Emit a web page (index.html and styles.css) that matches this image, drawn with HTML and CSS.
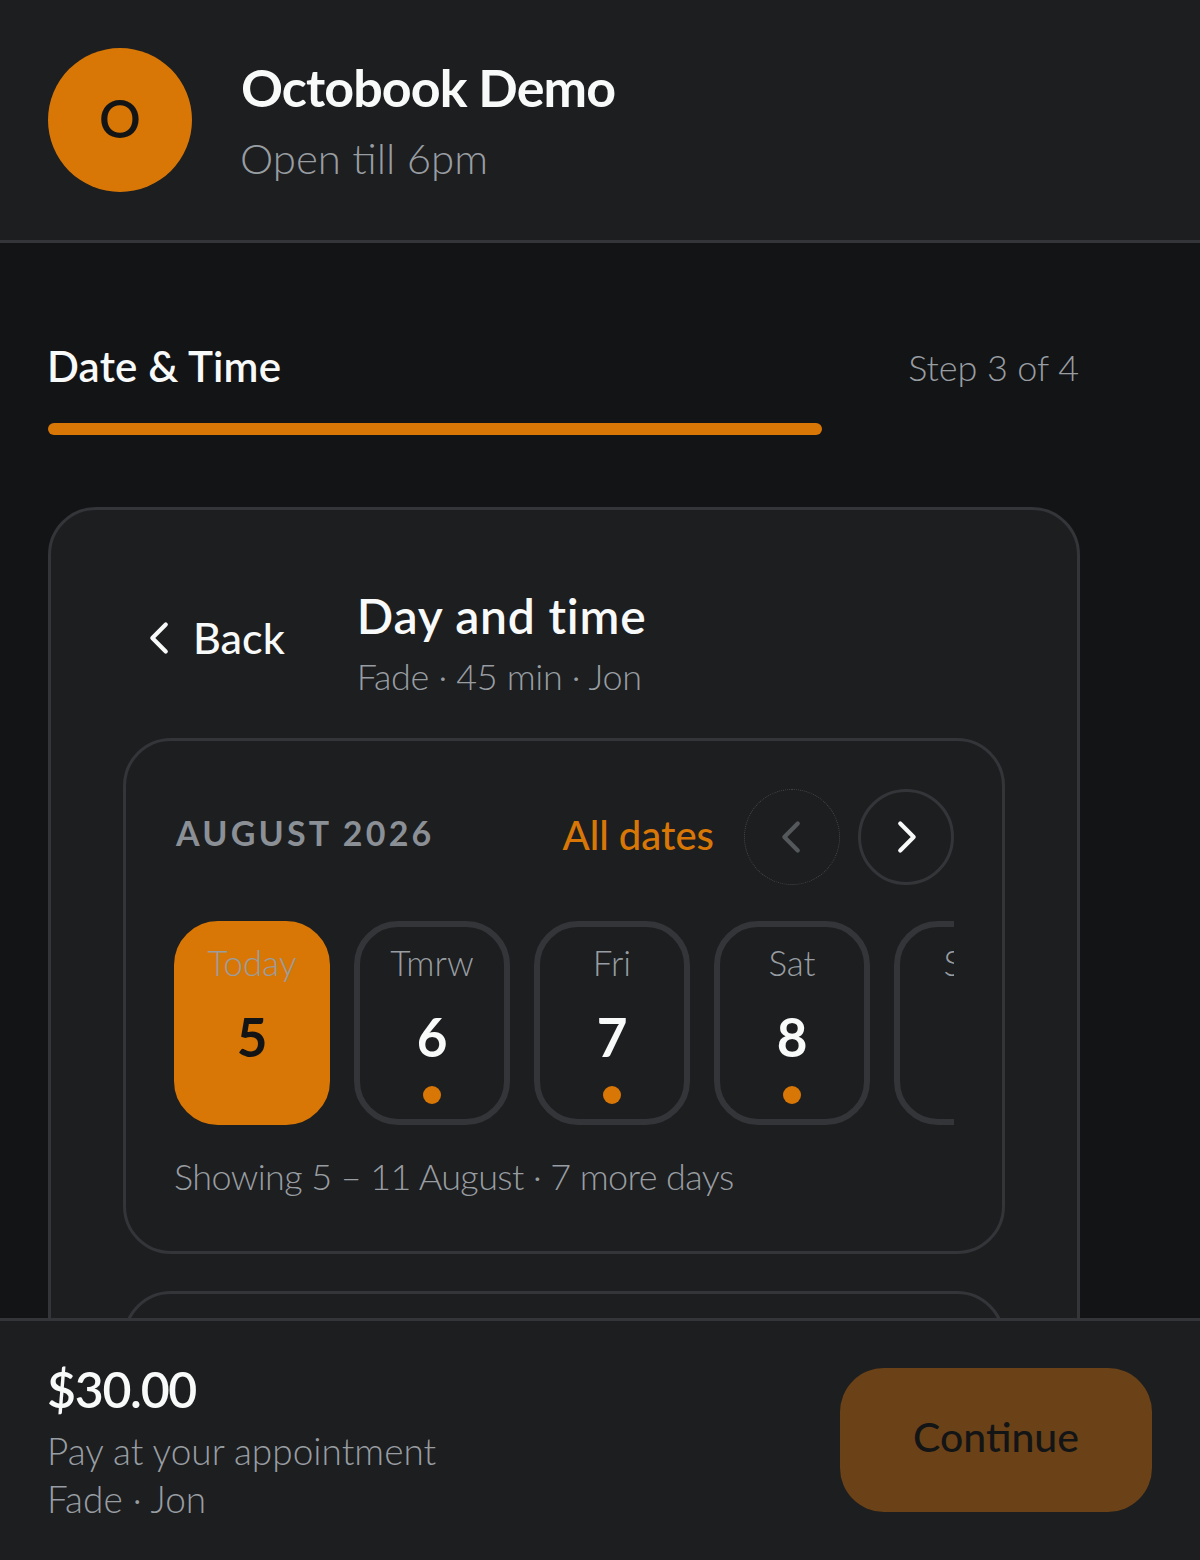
FILE: index.html
```html
<!DOCTYPE html>
<html lang="en">
<head>
    <meta charset="UTF-8">
    <meta name="viewport" content="width=device-width, initial-scale=1.0">
    <title>Octobook Demo</title>
    <link rel="stylesheet" href="styles.css">
</head>
<body>

    <header class="shop-header">
        <div class="shop-logo">O</div>
        <div class="shop-info">
            <h1>Octobook Demo</h1>
            <p>Open till 6pm</p>
        </div>
    </header>

    <main class="booking">
        <div class="step-row">
            <h2>Date &amp; Time</h2>
            <span class="step-count">Step 3 of 4</span>
        </div>
        <div class="progress"><div class="progress-fill"></div></div>

        <section class="card">
            <div class="card-head">
                <button class="btn-back">
                    <svg class="chevron" viewBox="0 0 24 24"><path d="M15 5l-7 7 7 7"/></svg>
                    Back
                </button>
                <div class="card-title">
                    <h3>Day and time</h3>
                    <p>Fade · 45 min · Jon</p>
                </div>
            </div>

            <div class="panel">
                <div class="panel-head">
                    <span class="month">AUGUST 2026</span>
                    <div class="panel-actions">
                        <a class="all-dates">All dates</a>
                        <button class="btn-round disabled">
                            <svg class="chevron" viewBox="0 0 24 24"><path d="M15 5l-7 7 7 7"/></svg>
                        </button>
                        <button class="btn-round">
                            <svg class="chevron" viewBox="0 0 24 24"><path d="M9 5l7 7-7 7"/></svg>
                        </button>
                    </div>
                </div>

                <div class="days">
                    <div class="day selected"><span class="day-name">Today</span><span class="day-num">5</span></div>
                    <div class="day"><span class="day-name">Tmrw</span><span class="day-num">6</span><i class="dot"></i></div>
                    <div class="day"><span class="day-name">Fri</span><span class="day-num">7</span><i class="dot"></i></div>
                    <div class="day"><span class="day-name">Sat</span><span class="day-num">8</span><i class="dot"></i></div>
                    <div class="day"><span class="day-name">Sun</span><span class="day-num">9</span><i class="dot"></i></div>
                </div>

                <p class="showing">Showing 5 – 11 August · 7 more days</p>
            </div>

            <div class="panel panel-times"></div>
        </section>
    </main>

    <footer class="summary">
        <div class="summary-text">
            <strong>$30.00</strong>
            <p>Pay at your appointment</p>
            <p>Fade · Jon</p>
        </div>
        <button class="btn-continue">Continue</button>
    </footer>

</body>
</html>
```

FILE: styles.css
```css
/* --- General --- */
html {
    height: 100%;
}

body {
    position: relative;
    margin: 0;
    height: 1560px;
    overflow: hidden;
    background-color: #131416;
    color: #f8f9f9;
    font-family: "Lato", "Open Sans", sans-serif;
}

h1, h2, h3, p {
    margin: 0;
}

button {
    font-family: inherit;
    background: none;
    border: none;
    padding: 0;
}

.chevron {
    width: 46px;
    height: 46px;
    fill: none;
    stroke: #f8f9f9;
    stroke-width: 2.2;
    stroke-linecap: round;
    stroke-linejoin: round;
}

/* --- Shop header --- */
.shop-header {
    display: flex;
    align-items: center;
    gap: 49px;
    height: 240px;
    padding: 0 48px;
    background-color: #1d1e20;
    border-bottom: 3px solid #333538;
}

.shop-logo {
    display: flex;
    align-items: center;
    justify-content: center;
    width: 144px;
    height: 144px;
    padding-bottom: 4px;
    box-sizing: border-box;
    border-radius: 50%;
    background-color: #d97706;
    color: #131416;
    font-size: 52px;
    font-weight: 600;
}

.shop-info {
    padding-top: 1px;
}

.shop-info h1 {
    font-size: 52px;
    font-weight: 700;
    line-height: 64px;
    letter-spacing: -0.9px;
}

.shop-info p {
    margin-top: 11px;
    margin-left: -1px;
    font-size: 42px;
    font-weight: 300;
    line-height: 56px;
    color: #989da2;
}

/* --- Step and progress --- */
.booking {
    padding: 96px 120px 0 48px;
}

.step-row {
    display: flex;
    align-items: center;
    justify-content: space-between;
    height: 56px;
}

.step-row h2 {
    margin-bottom: 2px;
    margin-left: -1px;
    font-size: 42px;
    font-weight: 600;
    letter-spacing: 0.2px;
}

.step-count {
    margin-right: 1px;
    font-size: 36px;
    font-weight: 300;
    letter-spacing: -0.1px;
    color: #989da2;
}

.progress {
    height: 12px;
    margin-top: 28px;
}

.progress-fill {
    width: 75%;
    height: 100%;
    border-radius: 6px;
    background-color: #d97706;
}

/* --- Booking card --- */
.card {
    margin-top: 72px;
    padding: 74px 72px 72px;
    background-color: #1d1e20;
    border: 3px solid #333538;
    border-radius: 48px;
}

.card-head {
    display: flex;
    align-items: center;
    gap: 72px;
    margin-bottom: 37px;
}

.btn-back {
    display: flex;
    align-items: center;
    gap: 10px;
    margin-left: 14px;
    padding-bottom: 10px;
    font-size: 43px;
    font-weight: 500;
    color: #f8f9f9;
}

.card-title h3 {
    font-size: 48px;
    font-weight: 600;
    line-height: 64px;
    letter-spacing: 0.8px;
}

.card-title p {
    margin-top: 3px;
    font-size: 36px;
    font-weight: 300;
    line-height: 50px;
    letter-spacing: -0.35px;
    color: #989da2;
}

/* --- Calendar panel --- */
.panel {
    padding: 48px 48px 50px;
    border: 3px solid #333538;
    border-radius: 48px;
}

.panel-head {
    display: flex;
    align-items: center;
    justify-content: space-between;
    height: 96px;
}

.month {
    margin-left: 2px;
    padding-bottom: 10px;
    font-size: 34px;
    font-weight: 700;
    letter-spacing: 3.2px;
    color: #8b9096;
}

.panel-actions {
    display: flex;
    align-items: center;
    gap: 18px;
}

.all-dates {
    margin-right: 12px;
    padding-bottom: 4px;
    font-size: 40px;
    font-weight: 500;
    color: #d97706;
}

.btn-round {
    display: flex;
    align-items: center;
    justify-content: center;
    width: 96px;
    height: 96px;
    box-sizing: border-box;
    border: 3px solid #333538;
    border-radius: 50%;
}

.btn-round.disabled {
    border: 1px dotted #45474a;
}

.btn-round.disabled .chevron {
    stroke: #55585b;
}

.days {
    display: flex;
    gap: 24px;
    margin-top: 36px;
    overflow: hidden;
}

.day {
    flex: 0 0 156px;
    display: flex;
    flex-direction: column;
    align-items: center;
    height: 204px;
    box-sizing: border-box;
    padding-top: 13px;
    border: 6px solid #333538;
    border-radius: 44px;
}

.day-name {
    font-size: 35px;
    font-weight: 300;
    line-height: 44px;
    color: #989da2;
}

.day-num {
    margin-top: 22px;
    font-size: 53px;
    font-weight: 700;
    line-height: 62px;
}

.dot {
    width: 18px;
    height: 18px;
    margin-top: 18px;
    border-radius: 50%;
    background-color: #d97706;
}

.day.selected {
    background-color: #d97706;
    border-color: #d97706;
    color: #131416;
}

.showing {
    margin-top: 26px;
    font-size: 36px;
    font-weight: 300;
    line-height: 50px;
    letter-spacing: -0.6px;
    color: #989da2;
}

.panel-times {
    height: 60px;
    margin-top: 37px;
}

/* --- Summary bar, stays on top of the page --- */
.summary {
    position: absolute;
    left: 0;
    right: 0;
    bottom: 0;
    display: flex;
    align-items: flex-start;
    justify-content: space-between;
    height: 242px;
    box-sizing: border-box;
    padding: 47px 48px 0;
    background-color: #1d1e20;
    border-top: 3px solid #333538;
}

.summary-text {
    margin-top: -11px;
    margin-left: -1px;
}

.summary-text strong {
    display: block;
    font-size: 50px;
    font-weight: 600;
    line-height: 64px;
    letter-spacing: -1.3px;
}

.summary-text p {
    font-size: 37px;
    font-weight: 300;
    line-height: 48px;
    color: #989da2;
}

.summary-text strong + p {
    margin-top: 6px;
}

.btn-continue {
    width: 312px;
    height: 144px;
    padding-bottom: 8px;
    border-radius: 44px;
    background-color: #6b4217;
    color: #131416;
    font-size: 41px;
    font-weight: 500;
}
```
